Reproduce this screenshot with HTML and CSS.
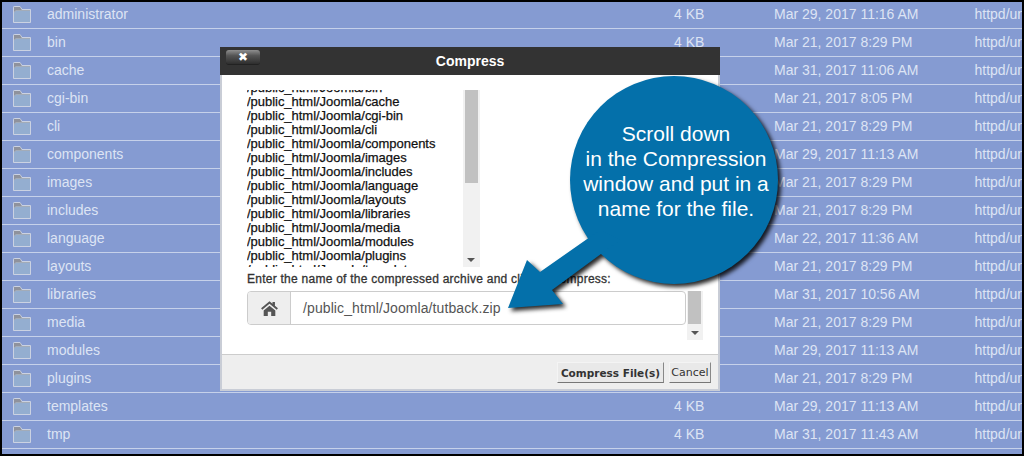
FILE: index.html
```html
<!DOCTYPE html>
<html lang="en">
<head>
<meta charset="utf-8">
<title>Compress</title>
<link rel="stylesheet" href="styles.css">
</head>
<body>
<svg class="defs" width="0" height="0" aria-hidden="true">
  <symbol id="folder" viewBox="0 0 18 17">
    <path d="M.5 16.500V1.200Q.5.500 1.200.500H7l2 3h8.500v13z" fill="#a3acb8" stroke="#cbd2e2"/>
    <path d="M1 16V6.500L3 5h14v11z" fill="#94aed0"/>
    <path d="M1 1h6l1.500 3H3L1 5.500z" fill="#8f929c"/>
  </symbol>
</svg>
<main class="frame">
  <ul class="files">
    <li class="row"><svg class="folder"><use href="#folder"/></svg><span>administrator</span><span>4 KB</span><span>Mar 29, 2017 11:16 AM</span><span>httpd/unix-directory</span></li>
    <li class="row"><svg class="folder"><use href="#folder"/></svg><span>bin</span><span>4 KB</span><span>Mar 21, 2017 8:29 PM</span><span>httpd/unix-directory</span></li>
    <li class="row"><svg class="folder"><use href="#folder"/></svg><span>cache</span><span>4 KB</span><span>Mar 31, 2017 11:06 AM</span><span>httpd/unix-directory</span></li>
    <li class="row"><svg class="folder"><use href="#folder"/></svg><span>cgi-bin</span><span>4 KB</span><span>Mar 21, 2017 8:05 PM</span><span>httpd/unix-directory</span></li>
    <li class="row"><svg class="folder"><use href="#folder"/></svg><span>cli</span><span>4 KB</span><span>Mar 21, 2017 8:29 PM</span><span>httpd/unix-directory</span></li>
    <li class="row"><svg class="folder"><use href="#folder"/></svg><span>components</span><span>4 KB</span><span>Mar 29, 2017 11:13 AM</span><span>httpd/unix-directory</span></li>
    <li class="row"><svg class="folder"><use href="#folder"/></svg><span>images</span><span>4 KB</span><span>Mar 21, 2017 8:29 PM</span><span>httpd/unix-directory</span></li>
    <li class="row"><svg class="folder"><use href="#folder"/></svg><span>includes</span><span>4 KB</span><span>Mar 21, 2017 8:29 PM</span><span>httpd/unix-directory</span></li>
    <li class="row"><svg class="folder"><use href="#folder"/></svg><span>language</span><span>4 KB</span><span>Mar 22, 2017 11:36 AM</span><span>httpd/unix-directory</span></li>
    <li class="row"><svg class="folder"><use href="#folder"/></svg><span>layouts</span><span>4 KB</span><span>Mar 21, 2017 8:29 PM</span><span>httpd/unix-directory</span></li>
    <li class="row"><svg class="folder"><use href="#folder"/></svg><span>libraries</span><span>4 KB</span><span>Mar 31, 2017 10:56 AM</span><span>httpd/unix-directory</span></li>
    <li class="row"><svg class="folder"><use href="#folder"/></svg><span>media</span><span>4 KB</span><span>Mar 21, 2017 8:29 PM</span><span>httpd/unix-directory</span></li>
    <li class="row"><svg class="folder"><use href="#folder"/></svg><span>modules</span><span>4 KB</span><span>Mar 29, 2017 11:13 AM</span><span>httpd/unix-directory</span></li>
    <li class="row"><svg class="folder"><use href="#folder"/></svg><span>plugins</span><span>4 KB</span><span>Mar 21, 2017 8:29 PM</span><span>httpd/unix-directory</span></li>
    <li class="row"><svg class="folder"><use href="#folder"/></svg><span>templates</span><span>4 KB</span><span>Mar 29, 2017 11:13 AM</span><span>httpd/unix-directory</span></li>
    <li class="row"><svg class="folder"><use href="#folder"/></svg><span>tmp</span><span>4 KB</span><span>Mar 31, 2017 11:43 AM</span><span>httpd/unix-directory</span></li>
  </ul>
</main>

<section class="dialog">
  <header class="dialog-head">
    <button class="close" type="button">✖</button>
    <h1>Compress</h1>
  </header>
  <div class="dialog-body">
    <div class="list-wrap">
      <div class="list">
        <p>/public_html/Joomla/bin</p>
        <p>/public_html/Joomla/cache</p>
        <p>/public_html/Joomla/cgi-bin</p>
        <p>/public_html/Joomla/cli</p>
        <p>/public_html/Joomla/components</p>
        <p>/public_html/Joomla/images</p>
        <p>/public_html/Joomla/includes</p>
        <p>/public_html/Joomla/language</p>
        <p>/public_html/Joomla/layouts</p>
        <p>/public_html/Joomla/libraries</p>
        <p>/public_html/Joomla/media</p>
        <p>/public_html/Joomla/modules</p>
        <p>/public_html/Joomla/plugins</p>
        <p>/public_html/Joomla/templates</p>
      </div>
      <div class="scroll list-scroll"><div class="thumb"></div><i class="arrow"></i></div>
    </div>
    <p class="prompt">Enter the name of the compressed archive and click to compress:</p>
    <div class="field-row">
      <div class="field">
        <span class="addon">
          <svg class="home" viewBox="0 0 18 16"><path d="M9 .3 0 7.800l1.300 1.500L9 2.800l7.700 6.500L18 7.800l-3.200-2.700V1h-2.600v1.900zM2.800 10.200 9 5l6.200 5.200V16h-4.400v-4.500H7.200V16H2.800z" fill="#555"/></svg>
        </span>
        <span class="path">/public_html/Joomla/tutback.zip</span>
      </div>
      <div class="scroll field-scroll"><div class="thumb"></div><i class="arrow"></i></div>
    </div>
  </div>
  <footer class="dialog-foot">
    <button class="btn btn-main" type="button">Compress File(s)</button>
    <button class="btn btn-cancel" type="button">Cancel</button>
  </footer>
</section>

<aside class="callout">
  <svg class="bubble" viewBox="0 0 1024 456">
    <g fill="#0470aa">
      <circle cx="674" cy="180" r="104"/>
      <path d="M508 308 527 260 540 272 600 230 620 240 552 290 563 304z"/>
    </g>
  </svg>
  <p class="callout-text">Scroll down<br>in the Compression<br>window and put in a<br>name for the file.</p>
</aside>
</body>
</html>
```
FILE: styles.css
```css
* { box-sizing: border-box; }
html, body { margin: 0; padding: 0; }
body {
  width: 1024px;
  height: 456px;
  overflow: hidden;
  position: relative;
  background: #000;
  font-family: "Liberation Sans", Arial, sans-serif;
}
.defs { position: absolute; }
.frame {
  margin: 2px 2px 0 2px;
  height: 452px;
  background: #859bd2;
  overflow: hidden;
}
.files { list-style: none; margin: -1px 0 0; padding: 0; }
.row {
  display: grid;
  grid-template-columns: 45px 627px 100px 200.5px 60px;
  align-items: center;
  height: 28px;
  padding-bottom: 1px;
  border-bottom: 1px solid #c6d1ea;
  color: #dde4f4;
  font-size: 14px;
  white-space: nowrap;
}
.folder {
  width: 18px;
  height: 17px;
  margin-left: 11px;
}

.dialog {
  position: absolute;
  left: 220px;
  top: 47px;
  width: 500px;
  height: 344px;
  display: flex;
  flex-direction: column;
  background: #fff;
  border: 2px solid #c9cdd6;
  border-top: 0;
}
.dialog-head {
  height: 28px;
  margin: 0 -2px;
  background: #333;
  position: relative;
  flex: none;
}
.dialog-head h1 {
  margin: 0;
  color: #fff;
  font-size: 14px;
  font-weight: bold;
  line-height: 28px;
  text-align: center;
}
.close {
  position: absolute;
  left: 6px;
  top: 3px;
  width: 34px;
  height: 15px;
  padding: 0;
  border: 0;
  border-bottom: 1px solid #222;
  border-radius: 3px;
  background: linear-gradient(#8f8f8f, #555 40%, #2e2e2e);
  color: #fff;
  font-size: 12px;
  line-height: 11px;
}
.dialog-body {
  flex: 1;
  padding: 15px 16px 0 25px;
}
.list-wrap {
  display: flex;
  height: 180px;
}
.list {
  width: 216px;
  height: 177px;
  overflow: hidden;
}
.list p {
  margin: 0;
  font-size: 13px;
  line-height: 14px;
  letter-spacing: -.03px;
  color: #111;
  -webkit-text-stroke: .25px #111;
  position: relative;
  top: -9px;
}
.scroll {
  position: relative;
  flex: none;
  background: #f1f1f1;
}
.list-scroll { width: 17px; height: 177px; }
.field-scroll { width: 16px; height: 49px; }
.thumb { background: #c1c1c1; }
.list-scroll .thumb { height: 93px; margin: 0 2px; }
.field-scroll .thumb { height: 33px; margin: 0 2px 0 1px; }
.arrow {
  position: absolute;
  left: 4px;
  bottom: 5px;
  border: 4px solid transparent;
  border-top: 4px solid #555;
  border-bottom: 0;
}
.prompt {
  margin: 2px 0 0;
  font-size: 12px;
  line-height: 14px;
  letter-spacing: .25px;
  color: #333;
  -webkit-text-stroke: .3px #333;
  white-space: nowrap;
}
.field-row {
  display: flex;
  margin-top: 5px;
  gap: 1px;
}
.field {
  flex: none;
  width: 439px;
  height: 34px;
  display: flex;
  align-items: center;
  border: 1px solid #ccc;
  border-radius: 4px;
  background: #fff;
  overflow: hidden;
}
.addon {
  width: 43px;
  height: 100%;
  flex: none;
  display: flex;
  align-items: center;
  justify-content: center;
  background: #eee;
  border-right: 1px solid #ccc;
}
.home { width: 17px; height: 15px; }
.path {
  padding-left: 12px;
  font-size: 14px;
  letter-spacing: .1px;
  color: #555;
}
.dialog-foot {
  flex: none;
  height: 35px;
  display: flex;
  justify-content: flex-end;
  align-items: flex-start;
  gap: 5px;
  padding: 7px 7px 0 0;
  background: #eee;
  border-top: 1px solid #ccc;
}
.btn {
  height: 21px;
  padding: 0;
  border: 1px solid;
  border-color: #f4f4f4 #888 #777 #f4f4f4;
  background: #e9e9e9;
  font-family: "DejaVu Sans", Verdana, sans-serif;
  font-size: 11px;
  color: #333;
  white-space: nowrap;
}
.btn-main { width: 107px; font-weight: bold; font-size: 10.5px; }
.btn-cancel { width: 42px; }

.callout { position: absolute; inset: 0; }
.bubble {
  position: absolute;
  left: 0;
  top: 0;
  width: 1024px;
  height: 456px;
  filter: drop-shadow(3px 3px 2px rgba(0, 0, 0, .85));
}
.callout-text {
  position: absolute;
  left: 572px;
  top: 121px;
  width: 208px;
  margin: 0;
  color: #fff;
  font-size: 21px;
  line-height: 25px;
  text-align: center;
}
```
